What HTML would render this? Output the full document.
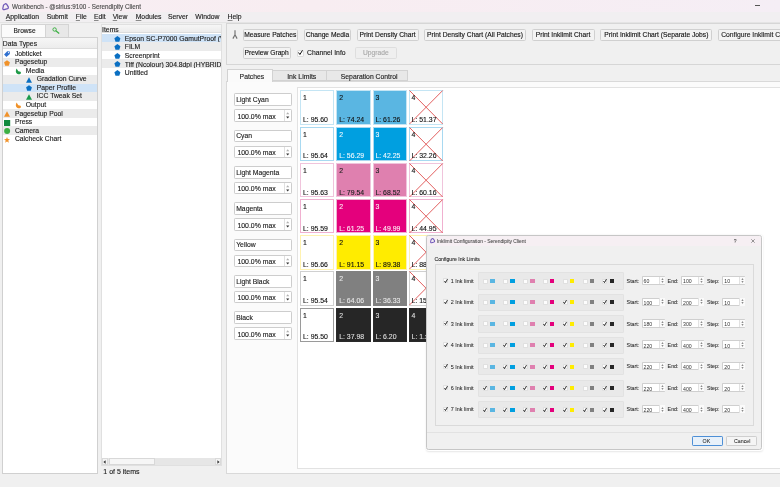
<!DOCTYPE html>
<html><head><meta charset="utf-8">
<style>
*{box-sizing:border-box;margin:0;padding:0}
html,body{width:780px;height:487px;overflow:hidden}
body{will-change:transform;position:relative;background:#f0f0f0;font-family:"Liberation Sans",sans-serif;font-size:6.7px;color:#1a1a1a}
.a{position:absolute}
.t{position:absolute;white-space:nowrap;line-height:1;-webkit-text-stroke:0.12px currentColor}
svg{position:absolute;overflow:visible}
u{text-decoration-thickness:0.4px;text-underline-offset:1px;text-decoration-color:#8a8a8a}
</style></head><body>
<div class="a" style="left:0px;top:0px;width:780.00px;height:11.50px;background:linear-gradient(90deg,#f7eef3,#f8edf1 40%,#f5eef5)"></div>
<div class="a" style="left:754.9px;top:5.0px;width:5.10px;height:0.60px;background:#555"></div>
<svg style="left:1.5px;top:2.6px" width="7.2" height="7.4" viewBox="0 0 7.2 7.4"><path d="M3.0 1.0 Q3.8 0.4 4.6 1.2 L6.3 3.9 Q6.8 5.0 5.6 5.6 L2.2 6.6 Q0.8 6.8 0.8 5.5 L1.4 2.6 Q1.8 1.6 3.0 1.0Z" fill="none" stroke="#7058b8" stroke-width="1.25"/></svg>
<div class="t" style="left:12px;top:3.87px;font-size:6.3px;color:#4a4a4a;">Workbench - @sirius:9100 - Serendipity Client</div>
<div class="a" style="left:0px;top:11.5px;width:780.00px;height:11.10px;background:#f1eff1;border-bottom:0.5px solid #e4e4e4"></div>
<div class="t" style="left:5.8px;top:14.44px;font-size:6.8px;"><u>A</u>pplication</div>
<div class="t" style="left:46.7px;top:14.44px;font-size:6.8px;">Submit</div>
<div class="t" style="left:75.8px;top:14.44px;font-size:6.8px;"><u>F</u>ile</div>
<div class="t" style="left:94px;top:14.44px;font-size:6.8px;"><u>E</u>dit</div>
<div class="t" style="left:112.7px;top:14.44px;font-size:6.8px;"><u>V</u>iew</div>
<div class="t" style="left:135.7px;top:14.44px;font-size:6.8px;"><u>M</u>odules</div>
<div class="t" style="left:168px;top:14.44px;font-size:6.8px;">Server</div>
<div class="t" style="left:195.3px;top:14.44px;font-size:6.8px;">Window</div>
<div class="t" style="left:227.6px;top:14.44px;font-size:6.8px;"><u>H</u>elp</div>
<div class="a" style="left:1px;top:23.8px;width:45.20px;height:13.80px;background:#fbfbfb;border:1px solid #d4d4d4;border-bottom:none"></div>
<div class="t" style="left:13.6px;top:27.61px;font-size:6.6px;">Browse</div>
<div class="a" style="left:46.2px;top:24.4px;width:23.00px;height:13.00px;background:#e8e8e8;border:1px solid #d4d4d4;border-left:none;border-bottom:none"></div>
<svg style="left:52.4px;top:27.4px" width="8" height="7" viewBox="0 0 8 7"><circle cx="2.6" cy="2.5" r="1.7" fill="none" stroke="#3cb043" stroke-width="1"/><path d="M3.8 3.7 L7.2 6.4" stroke="#3cb043" stroke-width="1.3"/></svg>
<div class="a" style="left:1.5px;top:37.2px;width:96.00px;height:437.20px;background:#fff;border:1px solid #d0d0d0"></div>
<div class="a" style="left:2.5px;top:38.2px;width:94.00px;height:11.30px;background:linear-gradient(#f6f6f6,#ececec);border-bottom:1px solid #dcdcdc"></div>
<div class="t" style="left:2.8px;top:40.84px;font-size:6.8px;">Data Types</div>
<div class="a" style="left:2.5px;top:49.5px;width:94.00px;height:8.55px;background:#ffffff"></div>
<svg style="left:4.3px;top:51.1px" width="6" height="6" viewBox="0 0 6 6"><path d="M3.2 0.2 L5.8 0.4 L5.8 3 L2.4 5.9 L0.1 3.4Z" fill="#2e6fd0"/><circle cx="4.5" cy="1.6" r="0.6" fill="#fff"/></svg>
<div class="t" style="left:14.9px;top:50.74px;font-size:6.8px;">Jobticket</div>
<div class="a" style="left:2.5px;top:58.05px;width:94.00px;height:8.55px;background:#ebebeb"></div>
<svg style="left:4.3px;top:59.65px" width="6" height="6" viewBox="0 0 6 6"><path d="M3 0.2 L5.9 2.3 L4.8 5.7 L1.2 5.7 L0.1 2.3Z" fill="#f0922a"/></svg>
<div class="t" style="left:14.9px;top:59.29px;font-size:6.8px;">Pagesetup</div>
<div class="a" style="left:2.5px;top:66.6px;width:94.00px;height:8.55px;background:#ffffff"></div>
<svg style="left:15.30px;top:67.50px" width="6.8" height="6.8" viewBox="0 0 6 6"><path d="M1.6 0.4 C0.3 1.6 0.4 4.4 2.2 5.3 C3.4 5.9 5.0 5.6 5.3 4.4 C5.4 3.4 4.4 2.8 3.5 3.1 C2.6 2.6 2.0 1.7 1.6 0.4Z" fill="#1f9a48"/></svg>
<div class="t" style="left:25.8px;top:67.84px;font-size:6.8px;">Media</div>
<div class="a" style="left:2.5px;top:75.15px;width:94.00px;height:8.55px;background:#ebebeb"></div>
<svg style="left:26.1px;top:76.75px" width="6" height="6" viewBox="0 0 6 6"><path d="M3 0.3 L6 5.7 L0 5.7Z" fill="#0a6fc2"/></svg>
<div class="t" style="left:36.7px;top:76.39px;font-size:6.8px;">Gradation Curve</div>
<div class="a" style="left:2.5px;top:83.7px;width:94.00px;height:8.55px;background:#cfe3f7"></div>
<svg style="left:26.1px;top:85.3px" width="6" height="6" viewBox="0 0 6 6"><path d="M3 0.2 L5.9 2.3 L4.8 5.7 L1.2 5.7 L0.1 2.3Z" fill="#0a6fc2"/></svg>
<div class="t" style="left:36.7px;top:84.94px;font-size:6.8px;">Paper Profile</div>
<div class="a" style="left:2.5px;top:92.25px;width:94.00px;height:8.55px;background:#ebebeb"></div>
<svg style="left:26.1px;top:93.85px" width="6" height="6" viewBox="0 0 6 6"><path d="M3 0.3 L6 5.7 L0 5.7Z" fill="#1a9a4a"/></svg>
<div class="t" style="left:36.7px;top:93.49px;font-size:6.8px;">ICC Tweak Set</div>
<div class="a" style="left:2.5px;top:100.8px;width:94.00px;height:8.55px;background:#ffffff"></div>
<svg style="left:15.30px;top:101.70px" width="6.8" height="6.8" viewBox="0 0 6 6"><path d="M1.6 0.4 C0.3 1.6 0.4 4.4 2.2 5.3 C3.4 5.9 5.0 5.6 5.3 4.4 C5.4 3.4 4.4 2.8 3.5 3.1 C2.6 2.6 2.0 1.7 1.6 0.4Z" fill="#f0922a"/></svg>
<div class="t" style="left:25.8px;top:102.04px;font-size:6.8px;">Output</div>
<div class="a" style="left:2.5px;top:109.35px;width:94.00px;height:8.55px;background:#ebebeb"></div>
<svg style="left:4.3px;top:110.95px" width="6" height="6" viewBox="0 0 6 6"><path d="M3 0.3 L6 5.7 L0 5.7Z" fill="#f0922a"/></svg>
<div class="t" style="left:14.9px;top:110.59px;font-size:6.8px;">Pagesetup Pool</div>
<div class="a" style="left:2.5px;top:117.9px;width:94.00px;height:8.55px;background:#ffffff"></div>
<svg style="left:4.3px;top:119.5px" width="6" height="6" viewBox="0 0 6 6"><rect x="0" y="0" width="6.2" height="6.2" fill="#118a3e"/></svg>
<div class="t" style="left:14.9px;top:119.14px;font-size:6.8px;">Press</div>
<div class="a" style="left:2.5px;top:126.45px;width:94.00px;height:8.55px;background:#ebebeb"></div>
<svg style="left:4.3px;top:128.05px" width="6" height="6" viewBox="0 0 6 6"><circle cx="3.1" cy="3" r="3" fill="#3cb043"/></svg>
<div class="t" style="left:14.9px;top:127.69px;font-size:6.8px;">Camera</div>
<div class="a" style="left:2.5px;top:135.0px;width:94.00px;height:8.55px;background:#ffffff"></div>
<svg style="left:4.3px;top:136.6px" width="6" height="6" viewBox="0 0 6 6"><path d="M3 0 L3.8 2.1 L6 2.2 L4.3 3.6 L4.9 5.8 L3 4.6 L1.1 5.8 L1.7 3.6 L0 2.2 L2.2 2.1Z" fill="#f0922a"/></svg>
<div class="t" style="left:14.9px;top:136.24px;font-size:6.8px;">Calcheck Chart</div>
<div class="a" style="left:100.8px;top:23.9px;width:121.40px;height:442.10px;background:#fff;border:1px solid #e0e0e0"></div>
<div class="a" style="left:101.8px;top:24.9px;width:119.40px;height:8.40px;background:linear-gradient(#f6f6f6,#ececec);border-bottom:1px solid #dcdcdc"></div>
<div class="t" style="left:102.1px;top:26.54px;font-size:6.8px;">Items</div>
<div class="a" style="left:101.8px;top:33.6px;width:119.40px;height:8.60px;background:#cfe3f7"></div>
<svg style="left:114.3px;top:35.60px" width="6.8" height="6" viewBox="0 0 6 6"><path d="M3 0.1 L6 2.2 L4.9 5.8 L1.1 5.8 L0 2.2Z" fill="#0a6fc2"/></svg>
<div class="t" style="left:124.8px;top:35.74px;font-size:6.8px;width:96.4px;overflow:hidden">Epson SC-P7000 GamutProof (V</div>
<div class="a" style="left:101.8px;top:42.2px;width:119.40px;height:8.60px;background:#ebebeb"></div>
<svg style="left:114.3px;top:44.20px" width="6.8" height="6" viewBox="0 0 6 6"><path d="M3 0.1 L6 2.2 L4.9 5.8 L1.1 5.8 L0 2.2Z" fill="#0a6fc2"/></svg>
<div class="t" style="left:124.8px;top:44.34px;font-size:6.8px;width:96.4px;overflow:hidden">FILM</div>
<div class="a" style="left:101.8px;top:50.8px;width:119.40px;height:8.60px;background:#fff"></div>
<svg style="left:114.3px;top:52.80px" width="6.8" height="6" viewBox="0 0 6 6"><path d="M3 0.1 L6 2.2 L4.9 5.8 L1.1 5.8 L0 2.2Z" fill="#0a6fc2"/></svg>
<div class="t" style="left:124.8px;top:52.94px;font-size:6.8px;width:96.4px;overflow:hidden">Screenprint</div>
<div class="a" style="left:101.8px;top:59.4px;width:119.40px;height:8.60px;background:#ebebeb"></div>
<svg style="left:114.3px;top:61.40px" width="6.8" height="6" viewBox="0 0 6 6"><path d="M3 0.1 L6 2.2 L4.9 5.8 L1.1 5.8 L0 2.2Z" fill="#0a6fc2"/></svg>
<div class="t" style="left:124.8px;top:61.54px;font-size:6.8px;width:96.4px;overflow:hidden">Tiff (Ncolour) 304.8dpi (HYBRID</div>
<div class="a" style="left:101.8px;top:68.0px;width:119.40px;height:8.60px;background:#fff"></div>
<svg style="left:114.3px;top:70.00px" width="6.8" height="6" viewBox="0 0 6 6"><path d="M3 0.1 L6 2.2 L4.9 5.8 L1.1 5.8 L0 2.2Z" fill="#0a6fc2"/></svg>
<div class="t" style="left:124.8px;top:70.14px;font-size:6.8px;width:96.4px;overflow:hidden">Untitled</div>
<div class="a" style="left:101.8px;top:457.5px;width:119.40px;height:7.70px;background:#e6e6e6"></div>
<div class="a" style="left:101.8px;top:457.5px;width:6.60px;height:7.70px;background:#f4f4f4;border:0.5px solid #dadada"></div>
<div class="a" style="left:108.6px;top:457.7px;width:46.60px;height:7.30px;background:#f6f6f6;border:0.5px solid #d8d8d8"></div>
<div class="a" style="left:214.9px;top:457.5px;width:6.30px;height:7.70px;background:#f4f4f4;border:0.5px solid #dadada"></div>
<svg style="left:103.4px;top:459.6px" width="3" height="4" viewBox="0 0 3 4"><path d="M2.6 0.2 L0.4 2 L2.6 3.8Z" fill="#333"/></svg>
<svg style="left:216.9px;top:459.6px" width="3" height="4" viewBox="0 0 3 4"><path d="M0.4 0.2 L2.6 2 L0.4 3.8Z" fill="#333"/></svg>
<div class="t" style="left:103.3px;top:468.37px;font-size:7.0px;">1 of 5 items</div>
<div class="a" style="left:226.2px;top:23.4px;width:563.80px;height:41.20px;border:1px solid #d6d6d6;background:#f0f0f0"></div>
<svg style="left:232px;top:29.6px" width="6" height="9" viewBox="0 0 6 9"><path d="M3 0.3 L3 5.2 M3 4.8 L0.9 8.6 M3 4.8 L5.1 8.6" fill="none" stroke="#707070" stroke-width="1.15"/></svg>
<div class="a" style="left:242.6px;top:28.6px;width:55.40px;height:12.80px;background:#f3f3f3;border:1px solid #d0d0d0;border-radius:1.6px;"></div>
<div class="t" style="left:242.6px;width:55.40px;text-align:center;top:31.83px;font-size:6.7px;color:#111">Measure Patches</div>
<div class="a" style="left:303.8px;top:28.6px;width:47.20px;height:12.80px;background:#f3f3f3;border:1px solid #d0d0d0;border-radius:1.6px;"></div>
<div class="t" style="left:303.8px;width:47.20px;text-align:center;top:31.83px;font-size:6.7px;color:#111">Change Media</div>
<div class="a" style="left:356.5px;top:28.6px;width:62.00px;height:12.80px;background:#f3f3f3;border:1px solid #d0d0d0;border-radius:1.6px;"></div>
<div class="t" style="left:356.5px;width:62.00px;text-align:center;top:31.83px;font-size:6.7px;color:#111">Print Density Chart</div>
<div class="a" style="left:424px;top:28.6px;width:102.00px;height:12.80px;background:#f3f3f3;border:1px solid #d0d0d0;border-radius:1.6px;"></div>
<div class="t" style="left:424px;width:102.00px;text-align:center;top:31.83px;font-size:6.7px;color:#111">Print Density Chart (All Patches)</div>
<div class="a" style="left:531.5px;top:28.6px;width:63.10px;height:12.80px;background:#f3f3f3;border:1px solid #d0d0d0;border-radius:1.6px;"></div>
<div class="t" style="left:531.5px;width:63.10px;text-align:center;top:31.83px;font-size:6.7px;color:#111">Print Inklimit Chart</div>
<div class="a" style="left:600.4px;top:28.6px;width:111.90px;height:12.80px;background:#f3f3f3;border:1px solid #d0d0d0;border-radius:1.6px;"></div>
<div class="t" style="left:600.4px;width:111.90px;text-align:center;top:31.83px;font-size:6.7px;color:#111">Print Inklimit Chart (Separate Jobs)</div>
<div class="a" style="left:718px;top:28.6px;width:82.00px;height:12.80px;background:#f3f3f3;border:1px solid #d0d0d0;border-radius:1.6px;"></div>
<div class="t" style="left:721.2px;top:32.09px;font-size:6.75px;">Configure Inklimit Chart</div>
<div class="a" style="left:242.6px;top:46.5px;width:48.20px;height:12.90px;background:#f3f3f3;border:1px solid #d0d0d0;border-radius:1.6px;"></div>
<div class="t" style="left:242.6px;width:48.20px;text-align:center;top:49.78px;font-size:6.7px;color:#111">Preview Graph</div>
<div class="a" style="left:296.7px;top:49.6px;width:6.90px;height:7.20px;background:#fbfbfb;border:0.6px solid #dcdcdc;border-radius:1px"></div>
<svg style="left:297.6px;top:50.4px" width="5" height="5" viewBox="0 0 5 5"><path d="M0.5 2.5 L1.9 4.5 L4.5 0.3" fill="none" stroke="#111" stroke-width="1"/></svg>
<div class="t" style="left:307px;top:49.84px;font-size:6.8px;">Channel Info</div>
<div class="a" style="left:355px;top:47px;width:41.70px;height:12.40px;background:#efefef;border:1px solid #dedede;border-radius:1.6px;"></div>
<div class="t" style="left:355px;width:41.70px;text-align:center;top:50.03px;font-size:6.7px;color:#a8a8a8">Upgrade</div>
<div class="a" style="left:226.2px;top:81.4px;width:563.80px;height:393.00px;background:#fbfbfb;border:1px solid #d9d9d9"></div>
<div class="a" style="left:227px;top:68.6px;width:45.80px;height:13.60px;background:#fafafa;border:1px solid #d2d2d2;border-bottom:none"></div>
<div class="t" style="left:239.6px;top:73.64px;font-size:6.8px;">Patches</div>
<div class="a" style="left:272.8px;top:69.6px;width:54.20px;height:11.90px;background:#e8e8e8;border:1px solid #d2d2d2;border-left:none"></div>
<div class="t" style="left:287.2px;top:73.66px;font-size:6.9px;">Ink Limits</div>
<div class="a" style="left:327px;top:69.6px;width:81.00px;height:11.90px;background:#e8e8e8;border:1px solid #d2d2d2;border-left:none"></div>
<div class="t" style="left:340.8px;top:73.64px;font-size:6.8px;">Separation Control</div>
<div class="a" style="left:297.4px;top:87.3px;width:492.60px;height:381.90px;background:#fff;border:1px solid #e2e2e2"></div>
<div class="a" style="left:234.3px;top:93.2px;width:57.70px;height:12.90px;background:#fff;border:1px solid #cdcdcd;border-radius:1.2px"></div>
<div class="t" style="left:236.2px;top:97.14px;font-size:6.8px;">Light Cyan</div>
<div class="a" style="left:234.3px;top:109.3px;width:57.70px;height:12.50px;background:#fff;border:1px solid #cdcdcd;border-radius:1.2px"></div>
<div class="a" style="left:284px;top:110.3px;width:7.00px;height:10.50px;border-left:0.7px solid #e0e0e0"></div>
<div class="t" style="left:237.4px;top:113.66px;font-size:6.9px;">100.0% max</div>
<svg style="left:286.1px;top:112.30px" width="3.4" height="7" viewBox="0 0 3.4 7"><path d="M0.1 2.2 L1.7 0.3 L3.3 2.2Z" fill="#b0b0b0"/><path d="M0.1 4.4 L1.7 6.4 L3.3 4.4Z" fill="#333"/></svg>
<div class="a" style="left:300.2px;top:90.3px;width:34.20px;height:34.50px;background:#fff;border:1px solid #c4e5f4"></div>
<div class="t" style="left:303.0px;top:95.46px;font-size:6.9px;color:#111;">1</div>
<div class="t" style="left:303.0px;top:117.16px;font-size:6.9px;color:#111;">L: 95.60</div>
<div class="a" style="left:336.4px;top:90.3px;width:34.20px;height:34.50px;background:#5ab6e2;border:1px solid #c4e5f4"></div>
<div class="t" style="left:339.2px;top:95.46px;font-size:6.9px;color:#111;">2</div>
<div class="t" style="left:339.2px;top:117.16px;font-size:6.9px;color:#111;">L: 74.24</div>
<div class="a" style="left:372.6px;top:90.3px;width:34.20px;height:34.50px;background:#5ab6e2;border:1px solid #c4e5f4"></div>
<div class="t" style="left:375.4px;top:95.46px;font-size:6.9px;color:#111;">3</div>
<div class="t" style="left:375.4px;top:117.16px;font-size:6.9px;color:#111;">L: 61.26</div>
<div class="a" style="left:408.8px;top:90.3px;width:34.20px;height:34.50px;background:#fff;border:1px solid #c4e5f4"></div>
<svg style="left:408.8px;top:90.30px" width="34.2" height="34.5" viewBox="0 0 34.2 34.5"><path d="M0.5 0.5 L33.7 34.0 M33.7 0.5 L0.5 34.0" stroke="#e25e5e" stroke-width="1"/></svg>
<div class="t" style="left:411.6px;top:95.46px;font-size:6.9px;color:#111;">4</div>
<div class="t" style="left:411.6px;top:117.16px;font-size:6.9px;color:#111;">L: 51.37</div>
<div class="a" style="left:234.3px;top:129.53px;width:57.70px;height:12.90px;background:#fff;border:1px solid #cdcdcd;border-radius:1.2px"></div>
<div class="t" style="left:236.2px;top:133.47px;font-size:6.8px;">Cyan</div>
<div class="a" style="left:234.3px;top:145.63px;width:57.70px;height:12.50px;background:#fff;border:1px solid #cdcdcd;border-radius:1.2px"></div>
<div class="a" style="left:284px;top:146.63px;width:7.00px;height:10.50px;border-left:0.7px solid #e0e0e0"></div>
<div class="t" style="left:237.4px;top:149.99px;font-size:6.9px;">100.0% max</div>
<svg style="left:286.1px;top:148.63px" width="3.4" height="7" viewBox="0 0 3.4 7"><path d="M0.1 2.2 L1.7 0.3 L3.3 2.2Z" fill="#b0b0b0"/><path d="M0.1 4.4 L1.7 6.4 L3.3 4.4Z" fill="#333"/></svg>
<div class="a" style="left:300.2px;top:126.5px;width:34.20px;height:34.50px;background:#fff;border:1px solid #a8d9f1"></div>
<div class="t" style="left:303.0px;top:131.66px;font-size:6.9px;color:#111;">1</div>
<div class="t" style="left:303.0px;top:153.36px;font-size:6.9px;color:#111;">L: 95.64</div>
<div class="a" style="left:336.4px;top:126.5px;width:34.20px;height:34.50px;background:#009fe0;border:1px solid #a8d9f1"></div>
<div class="t" style="left:339.2px;top:131.66px;font-size:6.9px;color:#e8f6fd;">2</div>
<div class="t" style="left:339.2px;top:153.36px;font-size:6.9px;color:#e8f6fd;">L: 56.29</div>
<div class="a" style="left:372.6px;top:126.5px;width:34.20px;height:34.50px;background:#009fe0;border:1px solid #a8d9f1"></div>
<div class="t" style="left:375.4px;top:131.66px;font-size:6.9px;color:#e8f6fd;">3</div>
<div class="t" style="left:375.4px;top:153.36px;font-size:6.9px;color:#e8f6fd;">L: 42.25</div>
<div class="a" style="left:408.8px;top:126.5px;width:34.20px;height:34.50px;background:#fff;border:1px solid #a8d9f1"></div>
<svg style="left:408.8px;top:126.50px" width="34.2" height="34.5" viewBox="0 0 34.2 34.5"><path d="M0.5 0.5 L33.7 34.0 M33.7 0.5 L0.5 34.0" stroke="#e25e5e" stroke-width="1"/></svg>
<div class="t" style="left:411.6px;top:131.66px;font-size:6.9px;color:#111;">4</div>
<div class="t" style="left:411.6px;top:153.36px;font-size:6.9px;color:#111;">L: 32.26</div>
<div class="a" style="left:234.3px;top:165.86px;width:57.70px;height:12.90px;background:#fff;border:1px solid #cdcdcd;border-radius:1.2px"></div>
<div class="t" style="left:236.2px;top:169.80px;font-size:6.8px;">Light Magenta</div>
<div class="a" style="left:234.3px;top:181.96px;width:57.70px;height:12.50px;background:#fff;border:1px solid #cdcdcd;border-radius:1.2px"></div>
<div class="a" style="left:284px;top:182.96px;width:7.00px;height:10.50px;border-left:0.7px solid #e0e0e0"></div>
<div class="t" style="left:237.4px;top:186.32px;font-size:6.9px;">100.0% max</div>
<svg style="left:286.1px;top:184.96px" width="3.4" height="7" viewBox="0 0 3.4 7"><path d="M0.1 2.2 L1.7 0.3 L3.3 2.2Z" fill="#b0b0b0"/><path d="M0.1 4.4 L1.7 6.4 L3.3 4.4Z" fill="#333"/></svg>
<div class="a" style="left:300.2px;top:162.7px;width:34.20px;height:34.50px;background:#fff;border:1px solid #f0c4dc"></div>
<div class="t" style="left:303.0px;top:167.86px;font-size:6.9px;color:#111;">1</div>
<div class="t" style="left:303.0px;top:189.56px;font-size:6.9px;color:#111;">L: 95.63</div>
<div class="a" style="left:336.4px;top:162.7px;width:34.20px;height:34.50px;background:#df80af;border:1px solid #f0c4dc"></div>
<div class="t" style="left:339.2px;top:167.86px;font-size:6.9px;color:#222;">2</div>
<div class="t" style="left:339.2px;top:189.56px;font-size:6.9px;color:#222;">L: 79.54</div>
<div class="a" style="left:372.6px;top:162.7px;width:34.20px;height:34.50px;background:#df80af;border:1px solid #f0c4dc"></div>
<div class="t" style="left:375.4px;top:167.86px;font-size:6.9px;color:#222;">3</div>
<div class="t" style="left:375.4px;top:189.56px;font-size:6.9px;color:#222;">L: 68.52</div>
<div class="a" style="left:408.8px;top:162.7px;width:34.20px;height:34.50px;background:#fff;border:1px solid #f0c4dc"></div>
<svg style="left:408.8px;top:162.70px" width="34.2" height="34.5" viewBox="0 0 34.2 34.5"><path d="M0.5 0.5 L33.7 34.0 M33.7 0.5 L0.5 34.0" stroke="#e25e5e" stroke-width="1"/></svg>
<div class="t" style="left:411.6px;top:167.86px;font-size:6.9px;color:#111;">4</div>
<div class="t" style="left:411.6px;top:189.56px;font-size:6.9px;color:#111;">L: 60.16</div>
<div class="a" style="left:234.3px;top:202.19px;width:57.70px;height:12.90px;background:#fff;border:1px solid #cdcdcd;border-radius:1.2px"></div>
<div class="t" style="left:236.2px;top:206.13px;font-size:6.8px;">Magenta</div>
<div class="a" style="left:234.3px;top:218.29px;width:57.70px;height:12.50px;background:#fff;border:1px solid #cdcdcd;border-radius:1.2px"></div>
<div class="a" style="left:284px;top:219.29px;width:7.00px;height:10.50px;border-left:0.7px solid #e0e0e0"></div>
<div class="t" style="left:237.4px;top:222.65px;font-size:6.9px;">100.0% max</div>
<svg style="left:286.1px;top:221.29px" width="3.4" height="7" viewBox="0 0 3.4 7"><path d="M0.1 2.2 L1.7 0.3 L3.3 2.2Z" fill="#b0b0b0"/><path d="M0.1 4.4 L1.7 6.4 L3.3 4.4Z" fill="#333"/></svg>
<div class="a" style="left:300.2px;top:198.9px;width:34.20px;height:34.50px;background:#fff;border:1px solid #f0b0d0"></div>
<div class="t" style="left:303.0px;top:204.06px;font-size:6.9px;color:#111;">1</div>
<div class="t" style="left:303.0px;top:225.76px;font-size:6.9px;color:#111;">L: 95.59</div>
<div class="a" style="left:336.4px;top:198.9px;width:34.20px;height:34.50px;background:#e4007c;border:1px solid #f0b0d0"></div>
<div class="t" style="left:339.2px;top:204.06px;font-size:6.9px;color:#fde6f1;">2</div>
<div class="t" style="left:339.2px;top:225.76px;font-size:6.9px;color:#fde6f1;">L: 61.25</div>
<div class="a" style="left:372.6px;top:198.9px;width:34.20px;height:34.50px;background:#e4007c;border:1px solid #f0b0d0"></div>
<div class="t" style="left:375.4px;top:204.06px;font-size:6.9px;color:#fde6f1;">3</div>
<div class="t" style="left:375.4px;top:225.76px;font-size:6.9px;color:#fde6f1;">L: 49.99</div>
<div class="a" style="left:408.8px;top:198.9px;width:34.20px;height:34.50px;background:#fff;border:1px solid #f0b0d0"></div>
<svg style="left:408.8px;top:198.90px" width="34.2" height="34.5" viewBox="0 0 34.2 34.5"><path d="M0.5 0.5 L33.7 34.0 M33.7 0.5 L0.5 34.0" stroke="#e25e5e" stroke-width="1"/></svg>
<div class="t" style="left:411.6px;top:204.06px;font-size:6.9px;color:#111;">4</div>
<div class="t" style="left:411.6px;top:225.76px;font-size:6.9px;color:#111;">L: 44.95</div>
<div class="a" style="left:234.3px;top:238.52px;width:57.70px;height:12.90px;background:#fff;border:1px solid #cdcdcd;border-radius:1.2px"></div>
<div class="t" style="left:236.2px;top:242.46px;font-size:6.8px;">Yellow</div>
<div class="a" style="left:234.3px;top:254.62px;width:57.70px;height:12.50px;background:#fff;border:1px solid #cdcdcd;border-radius:1.2px"></div>
<div class="a" style="left:284px;top:255.62px;width:7.00px;height:10.50px;border-left:0.7px solid #e0e0e0"></div>
<div class="t" style="left:237.4px;top:258.98px;font-size:6.9px;">100.0% max</div>
<svg style="left:286.1px;top:257.62px" width="3.4" height="7" viewBox="0 0 3.4 7"><path d="M0.1 2.2 L1.7 0.3 L3.3 2.2Z" fill="#b0b0b0"/><path d="M0.1 4.4 L1.7 6.4 L3.3 4.4Z" fill="#333"/></svg>
<div class="a" style="left:300.2px;top:235.1px;width:34.20px;height:34.50px;background:#fff;border:1px solid #fff2b0"></div>
<div class="t" style="left:303.0px;top:240.26px;font-size:6.9px;color:#111;">1</div>
<div class="t" style="left:303.0px;top:261.96px;font-size:6.9px;color:#111;">L: 95.66</div>
<div class="a" style="left:336.4px;top:235.1px;width:34.20px;height:34.50px;background:#ffec00;border:1px solid #fff2b0"></div>
<div class="t" style="left:339.2px;top:240.26px;font-size:6.9px;color:#111;">2</div>
<div class="t" style="left:339.2px;top:261.96px;font-size:6.9px;color:#111;">L: 91.15</div>
<div class="a" style="left:372.6px;top:235.1px;width:34.20px;height:34.50px;background:#ffec00;border:1px solid #fff2b0"></div>
<div class="t" style="left:375.4px;top:240.26px;font-size:6.9px;color:#111;">3</div>
<div class="t" style="left:375.4px;top:261.96px;font-size:6.9px;color:#111;">L: 89.38</div>
<div class="a" style="left:408.8px;top:235.1px;width:34.20px;height:34.50px;background:#fff;border:1px solid #fff2b0"></div>
<svg style="left:408.8px;top:235.10px" width="34.2" height="34.5" viewBox="0 0 34.2 34.5"><path d="M0.5 0.5 L33.7 34.0 M33.7 0.5 L0.5 34.0" stroke="#e25e5e" stroke-width="1"/></svg>
<div class="t" style="left:411.6px;top:240.26px;font-size:6.9px;color:#111;">4</div>
<div class="t" style="left:411.6px;top:261.96px;font-size:6.9px;color:#111;">L: 88.xx</div>
<div class="a" style="left:234.3px;top:274.85px;width:57.70px;height:12.90px;background:#fff;border:1px solid #cdcdcd;border-radius:1.2px"></div>
<div class="t" style="left:236.2px;top:278.79px;font-size:6.8px;">Light Black</div>
<div class="a" style="left:234.3px;top:290.95px;width:57.70px;height:12.50px;background:#fff;border:1px solid #cdcdcd;border-radius:1.2px"></div>
<div class="a" style="left:284px;top:291.95px;width:7.00px;height:10.50px;border-left:0.7px solid #e0e0e0"></div>
<div class="t" style="left:237.4px;top:295.31px;font-size:6.9px;">100.0% max</div>
<svg style="left:286.1px;top:293.95px" width="3.4" height="7" viewBox="0 0 3.4 7"><path d="M0.1 2.2 L1.7 0.3 L3.3 2.2Z" fill="#b0b0b0"/><path d="M0.1 4.4 L1.7 6.4 L3.3 4.4Z" fill="#333"/></svg>
<div class="a" style="left:300.2px;top:271.3px;width:34.20px;height:34.50px;background:#fff;border:1px solid #d0d0d0"></div>
<div class="t" style="left:303.0px;top:276.46px;font-size:6.9px;color:#111;">1</div>
<div class="t" style="left:303.0px;top:298.16px;font-size:6.9px;color:#111;">L: 95.54</div>
<div class="a" style="left:336.4px;top:271.3px;width:34.20px;height:34.50px;background:#808080;border:1px solid #808080"></div>
<div class="t" style="left:339.2px;top:276.46px;font-size:6.9px;color:#e6e6e6;">2</div>
<div class="t" style="left:339.2px;top:298.16px;font-size:6.9px;color:#e6e6e6;">L: 64.06</div>
<div class="a" style="left:372.6px;top:271.3px;width:34.20px;height:34.50px;background:#808080;border:1px solid #808080"></div>
<div class="t" style="left:375.4px;top:276.46px;font-size:6.9px;color:#e6e6e6;">3</div>
<div class="t" style="left:375.4px;top:298.16px;font-size:6.9px;color:#e6e6e6;">L: 36.33</div>
<div class="a" style="left:408.8px;top:271.3px;width:34.20px;height:34.50px;background:#fff;border:1px solid #d0d0d0"></div>
<svg style="left:408.8px;top:271.30px" width="34.2" height="34.5" viewBox="0 0 34.2 34.5"><path d="M0.5 0.5 L33.7 34.0 M33.7 0.5 L0.5 34.0" stroke="#e25e5e" stroke-width="1"/></svg>
<div class="t" style="left:411.6px;top:276.46px;font-size:6.9px;color:#111;">4</div>
<div class="t" style="left:411.6px;top:298.16px;font-size:6.9px;color:#111;">L: 15.xx</div>
<div class="a" style="left:234.3px;top:311.18px;width:57.70px;height:12.90px;background:#fff;border:1px solid #cdcdcd;border-radius:1.2px"></div>
<div class="t" style="left:236.2px;top:315.12px;font-size:6.8px;">Black</div>
<div class="a" style="left:234.3px;top:327.28px;width:57.70px;height:12.50px;background:#fff;border:1px solid #cdcdcd;border-radius:1.2px"></div>
<div class="a" style="left:284px;top:328.28px;width:7.00px;height:10.50px;border-left:0.7px solid #e0e0e0"></div>
<div class="t" style="left:237.4px;top:331.64px;font-size:6.9px;">100.0% max</div>
<svg style="left:286.1px;top:330.28px" width="3.4" height="7" viewBox="0 0 3.4 7"><path d="M0.1 2.2 L1.7 0.3 L3.3 2.2Z" fill="#b0b0b0"/><path d="M0.1 4.4 L1.7 6.4 L3.3 4.4Z" fill="#333"/></svg>
<div class="a" style="left:300.2px;top:307.5px;width:34.20px;height:34.50px;background:#fff;border:1px solid #9a9a9a"></div>
<div class="t" style="left:303.0px;top:312.66px;font-size:6.9px;color:#111;">1</div>
<div class="t" style="left:303.0px;top:334.36px;font-size:6.9px;color:#111;">L: 95.50</div>
<div class="a" style="left:336.4px;top:307.5px;width:34.20px;height:34.50px;background:#262626;border:1px solid #2a2a2a"></div>
<div class="t" style="left:339.2px;top:312.66px;font-size:6.9px;color:#dedede;">2</div>
<div class="t" style="left:339.2px;top:334.36px;font-size:6.9px;color:#dedede;">L: 37.98</div>
<div class="a" style="left:372.6px;top:307.5px;width:34.20px;height:34.50px;background:#262626;border:1px solid #2a2a2a"></div>
<div class="t" style="left:375.4px;top:312.66px;font-size:6.9px;color:#dedede;">3</div>
<div class="t" style="left:375.4px;top:334.36px;font-size:6.9px;color:#dedede;">L: 6.20</div>
<div class="a" style="left:408.8px;top:307.5px;width:34.20px;height:34.50px;background:#262626;border:1px solid #2a2a2a"></div>
<div class="t" style="left:411.6px;top:312.66px;font-size:6.9px;color:#dedede;">4</div>
<div class="t" style="left:411.6px;top:334.36px;font-size:6.9px;color:#dedede;">L: 1.xx</div>
<div class="a" style="left:425.9px;top:234.8px;width:337.10px;height:216.00px;border-radius:3px;box-shadow:0 0.5px 2px rgba(0,0,0,0.10)"></div>
<div class="a" style="left:426.4px;top:235.3px;width:335.80px;height:214.70px;background:#f0f0f0;border:0.8px solid #c6c6c6;border-radius:2.5px;overflow:hidden"></div>
<div class="a" style="left:427.2px;top:236.10000000000002px;width:334.20px;height:10.40px;background:#f6eff3;border-radius:2px 2px 0 0"></div>
<svg style="left:430.0px;top:238.3px" width="5.2" height="5.4" viewBox="0 0 7.2 7.4"><path d="M3.0 1.0 Q3.8 0.4 4.6 1.2 L6.3 3.9 Q6.8 5.0 5.6 5.6 L2.2 6.6 Q0.8 6.8 0.8 5.5 L1.4 2.6 Q1.8 1.6 3.0 1.0Z" fill="none" stroke="#7058b8" stroke-width="1.4"/></svg>
<div class="t" style="left:436.8px;top:239.71px;font-size:4.95px;color:#444;-webkit-text-stroke:0.05px">Inklimit Configuration - Serendipity Client</div>
<div class="t" style="left:733.8px;top:239.37px;font-size:5px;color:#555;">?</div>
<svg style="left:750.6px;top:239.4px" width="4" height="4" viewBox="0 0 4 4"><path d="M0.3 0.3 L3.7 3.7 M3.7 0.3 L0.3 3.7" stroke="#555" stroke-width="0.6"/></svg>
<div class="t" style="left:434.5px;top:256.84px;font-size:5.15px;color:#222;-webkit-text-stroke:0.08px">Configure Ink Limits</div>
<div class="a" style="left:435.3px;top:263.5px;width:318.50px;height:162.90px;border:0.8px solid #dadada"></div>
<div class="a" style="left:478.3px;top:272.3px;width:145.50px;height:17.40px;background:#e9e9e9;border:0.6px solid #e2e2e2;border-radius:1px"></div>
<div class="a" style="left:443.0px;top:278.0px;width:5.00px;height:5.00px;background:#fdfdfd;border:0.5px solid #e0e0e0;border-radius:0.6px"></div>
<svg style="left:443.50px;top:278.50px" width="4" height="4" viewBox="0 0 4 4"><path d="M0.5 2.0 L1.5 3.6 L3.5 0.1" fill="none" stroke="#1a1a1a" stroke-width="0.9"/></svg>
<div class="t" style="left:450.8px;top:278.73px;font-size:5.4px;color:#222;-webkit-text-stroke:0.05px">1 Ink limit</div>
<div class="a" style="left:482.9px;top:278.5px;width:5.00px;height:5.00px;background:#fdfdfd;border:0.5px solid #e0e0e0;border-radius:0.6px"></div>
<div class="a" style="left:490.1px;top:278.8px;width:4.60px;height:4.20px;background:#5ab6e2"></div>
<div class="a" style="left:502.83px;top:278.5px;width:5.00px;height:5.00px;background:#fdfdfd;border:0.5px solid #e0e0e0;border-radius:0.6px"></div>
<div class="a" style="left:510.03px;top:278.8px;width:4.60px;height:4.20px;background:#009fe0"></div>
<div class="a" style="left:522.76px;top:278.5px;width:5.00px;height:5.00px;background:#fdfdfd;border:0.5px solid #e0e0e0;border-radius:0.6px"></div>
<div class="a" style="left:529.96px;top:278.8px;width:4.60px;height:4.20px;background:#df80af"></div>
<div class="a" style="left:542.69px;top:278.5px;width:5.00px;height:5.00px;background:#fdfdfd;border:0.5px solid #e0e0e0;border-radius:0.6px"></div>
<div class="a" style="left:549.89px;top:278.8px;width:4.60px;height:4.20px;background:#e4007c"></div>
<div class="a" style="left:562.62px;top:278.5px;width:5.00px;height:5.00px;background:#fdfdfd;border:0.5px solid #e0e0e0;border-radius:0.6px"></div>
<div class="a" style="left:569.82px;top:278.8px;width:4.60px;height:4.20px;background:#ffec00"></div>
<div class="a" style="left:582.55px;top:278.5px;width:5.00px;height:5.00px;background:#fdfdfd;border:0.5px solid #e0e0e0;border-radius:0.6px"></div>
<div class="a" style="left:589.75px;top:278.8px;width:4.60px;height:4.20px;background:#808080"></div>
<div class="a" style="left:602.48px;top:278.5px;width:5.00px;height:5.00px;background:#fdfdfd;border:0.5px solid #e0e0e0;border-radius:0.6px"></div>
<svg style="left:602.98px;top:279.00px" width="4" height="4" viewBox="0 0 4 4"><path d="M0.5 2.0 L1.5 3.6 L3.5 0.1" fill="none" stroke="#1a1a1a" stroke-width="0.9"/></svg>
<div class="a" style="left:609.68px;top:278.8px;width:4.60px;height:4.20px;background:#262626"></div>
<div class="t" style="left:626.6px;top:278.61px;font-size:5.3px;color:#222;-webkit-text-stroke:0.05px">Start:</div>
<div class="a" style="left:641.5px;top:276.1px;width:23.70px;height:8.60px;background:#fff;border:0.6px solid #cfcfcf;border-radius:0.8px"></div>
<div class="a" style="left:659.2px;top:276.7px;width:5.40px;height:7.40px;border-left:0.5px solid #e2e2e2;background:#fafafa"></div>
<svg style="left:660.60px;top:277.90px" width="3" height="5" viewBox="0 0 3 5"><path d="M0.4 1.7 L1.5 0.3 L2.6 1.7Z M0.4 3.3 L1.5 4.7 L2.6 3.3Z" fill="#666"/></svg>
<div class="t" style="left:643.5px;top:279.30px;font-size:5.2px;color:#333;-webkit-text-stroke:0">60</div>
<div class="t" style="left:667.6px;top:278.61px;font-size:5.3px;color:#222;-webkit-text-stroke:0.05px">End:</div>
<div class="a" style="left:681.0px;top:276.1px;width:23.40px;height:8.60px;background:#fff;border:0.6px solid #cfcfcf;border-radius:0.8px"></div>
<div class="a" style="left:698.4px;top:276.7px;width:5.40px;height:7.40px;border-left:0.5px solid #e2e2e2;background:#fafafa"></div>
<svg style="left:699.80px;top:277.90px" width="3" height="5" viewBox="0 0 3 5"><path d="M0.4 1.7 L1.5 0.3 L2.6 1.7Z M0.4 3.3 L1.5 4.7 L2.6 3.3Z" fill="#666"/></svg>
<div class="t" style="left:683.0px;top:279.30px;font-size:5.2px;color:#333;-webkit-text-stroke:0">100</div>
<div class="t" style="left:707.0px;top:278.61px;font-size:5.3px;color:#222;-webkit-text-stroke:0.05px">Step:</div>
<div class="a" style="left:722.3px;top:276.1px;width:23.00px;height:8.60px;background:#fff;border:0.6px solid #cfcfcf;border-radius:0.8px"></div>
<div class="a" style="left:739.3px;top:276.7px;width:5.40px;height:7.40px;border-left:0.5px solid #e2e2e2;background:#fafafa"></div>
<svg style="left:740.70px;top:277.90px" width="3" height="5" viewBox="0 0 3 5"><path d="M0.4 1.7 L1.5 0.3 L2.6 1.7Z M0.4 3.3 L1.5 4.7 L2.6 3.3Z" fill="#666"/></svg>
<div class="t" style="left:724.3px;top:279.30px;font-size:5.2px;color:#333;-webkit-text-stroke:0">10</div>
<div class="a" style="left:478.3px;top:293.75px;width:145.50px;height:17.40px;background:#e9e9e9;border:0.6px solid #e2e2e2;border-radius:1px"></div>
<div class="a" style="left:443.0px;top:299.45px;width:5.00px;height:5.00px;background:#fdfdfd;border:0.5px solid #e0e0e0;border-radius:0.6px"></div>
<svg style="left:443.50px;top:299.95px" width="4" height="4" viewBox="0 0 4 4"><path d="M0.5 2.0 L1.5 3.6 L3.5 0.1" fill="none" stroke="#1a1a1a" stroke-width="0.9"/></svg>
<div class="t" style="left:450.8px;top:300.18px;font-size:5.4px;color:#222;-webkit-text-stroke:0.05px">2 Ink limit</div>
<div class="a" style="left:482.9px;top:299.95px;width:5.00px;height:5.00px;background:#fdfdfd;border:0.5px solid #e0e0e0;border-radius:0.6px"></div>
<div class="a" style="left:490.1px;top:300.25px;width:4.60px;height:4.20px;background:#5ab6e2"></div>
<div class="a" style="left:502.83px;top:299.95px;width:5.00px;height:5.00px;background:#fdfdfd;border:0.5px solid #e0e0e0;border-radius:0.6px"></div>
<div class="a" style="left:510.03px;top:300.25px;width:4.60px;height:4.20px;background:#009fe0"></div>
<div class="a" style="left:522.76px;top:299.95px;width:5.00px;height:5.00px;background:#fdfdfd;border:0.5px solid #e0e0e0;border-radius:0.6px"></div>
<div class="a" style="left:529.96px;top:300.25px;width:4.60px;height:4.20px;background:#df80af"></div>
<div class="a" style="left:542.69px;top:299.95px;width:5.00px;height:5.00px;background:#fdfdfd;border:0.5px solid #e0e0e0;border-radius:0.6px"></div>
<div class="a" style="left:549.89px;top:300.25px;width:4.60px;height:4.20px;background:#e4007c"></div>
<div class="a" style="left:562.62px;top:299.95px;width:5.00px;height:5.00px;background:#fdfdfd;border:0.5px solid #e0e0e0;border-radius:0.6px"></div>
<svg style="left:563.12px;top:300.45px" width="4" height="4" viewBox="0 0 4 4"><path d="M0.5 2.0 L1.5 3.6 L3.5 0.1" fill="none" stroke="#1a1a1a" stroke-width="0.9"/></svg>
<div class="a" style="left:569.82px;top:300.25px;width:4.60px;height:4.20px;background:#ffec00"></div>
<div class="a" style="left:582.55px;top:299.95px;width:5.00px;height:5.00px;background:#fdfdfd;border:0.5px solid #e0e0e0;border-radius:0.6px"></div>
<div class="a" style="left:589.75px;top:300.25px;width:4.60px;height:4.20px;background:#808080"></div>
<div class="a" style="left:602.48px;top:299.95px;width:5.00px;height:5.00px;background:#fdfdfd;border:0.5px solid #e0e0e0;border-radius:0.6px"></div>
<svg style="left:602.98px;top:300.45px" width="4" height="4" viewBox="0 0 4 4"><path d="M0.5 2.0 L1.5 3.6 L3.5 0.1" fill="none" stroke="#1a1a1a" stroke-width="0.9"/></svg>
<div class="a" style="left:609.68px;top:300.25px;width:4.60px;height:4.20px;background:#262626"></div>
<div class="t" style="left:626.6px;top:300.06px;font-size:5.3px;color:#222;-webkit-text-stroke:0.05px">Start:</div>
<div class="a" style="left:641.5px;top:297.55px;width:23.70px;height:8.60px;background:#fff;border:0.6px solid #cfcfcf;border-radius:0.8px"></div>
<div class="a" style="left:659.2px;top:298.15px;width:5.40px;height:7.40px;border-left:0.5px solid #e2e2e2;background:#fafafa"></div>
<svg style="left:660.60px;top:299.35px" width="3" height="5" viewBox="0 0 3 5"><path d="M0.4 1.7 L1.5 0.3 L2.6 1.7Z M0.4 3.3 L1.5 4.7 L2.6 3.3Z" fill="#666"/></svg>
<div class="t" style="left:643.5px;top:300.75px;font-size:5.2px;color:#333;-webkit-text-stroke:0">100</div>
<div class="t" style="left:667.6px;top:300.06px;font-size:5.3px;color:#222;-webkit-text-stroke:0.05px">End:</div>
<div class="a" style="left:681.0px;top:297.55px;width:23.40px;height:8.60px;background:#fff;border:0.6px solid #cfcfcf;border-radius:0.8px"></div>
<div class="a" style="left:698.4px;top:298.15px;width:5.40px;height:7.40px;border-left:0.5px solid #e2e2e2;background:#fafafa"></div>
<svg style="left:699.80px;top:299.35px" width="3" height="5" viewBox="0 0 3 5"><path d="M0.4 1.7 L1.5 0.3 L2.6 1.7Z M0.4 3.3 L1.5 4.7 L2.6 3.3Z" fill="#666"/></svg>
<div class="t" style="left:683.0px;top:300.75px;font-size:5.2px;color:#333;-webkit-text-stroke:0">200</div>
<div class="t" style="left:707.0px;top:300.06px;font-size:5.3px;color:#222;-webkit-text-stroke:0.05px">Step:</div>
<div class="a" style="left:722.3px;top:297.55px;width:23.00px;height:8.60px;background:#fff;border:0.6px solid #cfcfcf;border-radius:0.8px"></div>
<div class="a" style="left:739.3px;top:298.15px;width:5.40px;height:7.40px;border-left:0.5px solid #e2e2e2;background:#fafafa"></div>
<svg style="left:740.70px;top:299.35px" width="3" height="5" viewBox="0 0 3 5"><path d="M0.4 1.7 L1.5 0.3 L2.6 1.7Z M0.4 3.3 L1.5 4.7 L2.6 3.3Z" fill="#666"/></svg>
<div class="t" style="left:724.3px;top:300.75px;font-size:5.2px;color:#333;-webkit-text-stroke:0">10</div>
<div class="a" style="left:478.3px;top:315.2px;width:145.50px;height:17.40px;background:#e9e9e9;border:0.6px solid #e2e2e2;border-radius:1px"></div>
<div class="a" style="left:443.0px;top:320.9px;width:5.00px;height:5.00px;background:#fdfdfd;border:0.5px solid #e0e0e0;border-radius:0.6px"></div>
<svg style="left:443.50px;top:321.40px" width="4" height="4" viewBox="0 0 4 4"><path d="M0.5 2.0 L1.5 3.6 L3.5 0.1" fill="none" stroke="#1a1a1a" stroke-width="0.9"/></svg>
<div class="t" style="left:450.8px;top:321.63px;font-size:5.4px;color:#222;-webkit-text-stroke:0.05px">3 Ink limit</div>
<div class="a" style="left:482.9px;top:321.4px;width:5.00px;height:5.00px;background:#fdfdfd;border:0.5px solid #e0e0e0;border-radius:0.6px"></div>
<div class="a" style="left:490.1px;top:321.7px;width:4.60px;height:4.20px;background:#5ab6e2"></div>
<div class="a" style="left:502.83px;top:321.4px;width:5.00px;height:5.00px;background:#fdfdfd;border:0.5px solid #e0e0e0;border-radius:0.6px"></div>
<div class="a" style="left:510.03px;top:321.7px;width:4.60px;height:4.20px;background:#009fe0"></div>
<div class="a" style="left:522.76px;top:321.4px;width:5.00px;height:5.00px;background:#fdfdfd;border:0.5px solid #e0e0e0;border-radius:0.6px"></div>
<div class="a" style="left:529.96px;top:321.7px;width:4.60px;height:4.20px;background:#df80af"></div>
<div class="a" style="left:542.69px;top:321.4px;width:5.00px;height:5.00px;background:#fdfdfd;border:0.5px solid #e0e0e0;border-radius:0.6px"></div>
<svg style="left:543.19px;top:321.90px" width="4" height="4" viewBox="0 0 4 4"><path d="M0.5 2.0 L1.5 3.6 L3.5 0.1" fill="none" stroke="#1a1a1a" stroke-width="0.9"/></svg>
<div class="a" style="left:549.89px;top:321.7px;width:4.60px;height:4.20px;background:#e4007c"></div>
<div class="a" style="left:562.62px;top:321.4px;width:5.00px;height:5.00px;background:#fdfdfd;border:0.5px solid #e0e0e0;border-radius:0.6px"></div>
<svg style="left:563.12px;top:321.90px" width="4" height="4" viewBox="0 0 4 4"><path d="M0.5 2.0 L1.5 3.6 L3.5 0.1" fill="none" stroke="#1a1a1a" stroke-width="0.9"/></svg>
<div class="a" style="left:569.82px;top:321.7px;width:4.60px;height:4.20px;background:#ffec00"></div>
<div class="a" style="left:582.55px;top:321.4px;width:5.00px;height:5.00px;background:#fdfdfd;border:0.5px solid #e0e0e0;border-radius:0.6px"></div>
<div class="a" style="left:589.75px;top:321.7px;width:4.60px;height:4.20px;background:#808080"></div>
<div class="a" style="left:602.48px;top:321.4px;width:5.00px;height:5.00px;background:#fdfdfd;border:0.5px solid #e0e0e0;border-radius:0.6px"></div>
<svg style="left:602.98px;top:321.90px" width="4" height="4" viewBox="0 0 4 4"><path d="M0.5 2.0 L1.5 3.6 L3.5 0.1" fill="none" stroke="#1a1a1a" stroke-width="0.9"/></svg>
<div class="a" style="left:609.68px;top:321.7px;width:4.60px;height:4.20px;background:#262626"></div>
<div class="t" style="left:626.6px;top:321.51px;font-size:5.3px;color:#222;-webkit-text-stroke:0.05px">Start:</div>
<div class="a" style="left:641.5px;top:319.0px;width:23.70px;height:8.60px;background:#fff;border:0.6px solid #cfcfcf;border-radius:0.8px"></div>
<div class="a" style="left:659.2px;top:319.6px;width:5.40px;height:7.40px;border-left:0.5px solid #e2e2e2;background:#fafafa"></div>
<svg style="left:660.60px;top:320.80px" width="3" height="5" viewBox="0 0 3 5"><path d="M0.4 1.7 L1.5 0.3 L2.6 1.7Z M0.4 3.3 L1.5 4.7 L2.6 3.3Z" fill="#666"/></svg>
<div class="t" style="left:643.5px;top:322.20px;font-size:5.2px;color:#333;-webkit-text-stroke:0">180</div>
<div class="t" style="left:667.6px;top:321.51px;font-size:5.3px;color:#222;-webkit-text-stroke:0.05px">End:</div>
<div class="a" style="left:681.0px;top:319.0px;width:23.40px;height:8.60px;background:#fff;border:0.6px solid #cfcfcf;border-radius:0.8px"></div>
<div class="a" style="left:698.4px;top:319.6px;width:5.40px;height:7.40px;border-left:0.5px solid #e2e2e2;background:#fafafa"></div>
<svg style="left:699.80px;top:320.80px" width="3" height="5" viewBox="0 0 3 5"><path d="M0.4 1.7 L1.5 0.3 L2.6 1.7Z M0.4 3.3 L1.5 4.7 L2.6 3.3Z" fill="#666"/></svg>
<div class="t" style="left:683.0px;top:322.20px;font-size:5.2px;color:#333;-webkit-text-stroke:0">300</div>
<div class="t" style="left:707.0px;top:321.51px;font-size:5.3px;color:#222;-webkit-text-stroke:0.05px">Step:</div>
<div class="a" style="left:722.3px;top:319.0px;width:23.00px;height:8.60px;background:#fff;border:0.6px solid #cfcfcf;border-radius:0.8px"></div>
<div class="a" style="left:739.3px;top:319.6px;width:5.40px;height:7.40px;border-left:0.5px solid #e2e2e2;background:#fafafa"></div>
<svg style="left:740.70px;top:320.80px" width="3" height="5" viewBox="0 0 3 5"><path d="M0.4 1.7 L1.5 0.3 L2.6 1.7Z M0.4 3.3 L1.5 4.7 L2.6 3.3Z" fill="#666"/></svg>
<div class="t" style="left:724.3px;top:322.20px;font-size:5.2px;color:#333;-webkit-text-stroke:0">10</div>
<div class="a" style="left:478.3px;top:336.65px;width:145.50px;height:17.40px;background:#e9e9e9;border:0.6px solid #e2e2e2;border-radius:1px"></div>
<div class="a" style="left:443.0px;top:342.35px;width:5.00px;height:5.00px;background:#fdfdfd;border:0.5px solid #e0e0e0;border-radius:0.6px"></div>
<svg style="left:443.50px;top:342.85px" width="4" height="4" viewBox="0 0 4 4"><path d="M0.5 2.0 L1.5 3.6 L3.5 0.1" fill="none" stroke="#1a1a1a" stroke-width="0.9"/></svg>
<div class="t" style="left:450.8px;top:343.08px;font-size:5.4px;color:#222;-webkit-text-stroke:0.05px">4 Ink limit</div>
<div class="a" style="left:482.9px;top:342.85px;width:5.00px;height:5.00px;background:#fdfdfd;border:0.5px solid #e0e0e0;border-radius:0.6px"></div>
<div class="a" style="left:490.1px;top:343.15px;width:4.60px;height:4.20px;background:#5ab6e2"></div>
<div class="a" style="left:502.83px;top:342.85px;width:5.00px;height:5.00px;background:#fdfdfd;border:0.5px solid #e0e0e0;border-radius:0.6px"></div>
<svg style="left:503.33px;top:343.35px" width="4" height="4" viewBox="0 0 4 4"><path d="M0.5 2.0 L1.5 3.6 L3.5 0.1" fill="none" stroke="#1a1a1a" stroke-width="0.9"/></svg>
<div class="a" style="left:510.03px;top:343.15px;width:4.60px;height:4.20px;background:#009fe0"></div>
<div class="a" style="left:522.76px;top:342.85px;width:5.00px;height:5.00px;background:#fdfdfd;border:0.5px solid #e0e0e0;border-radius:0.6px"></div>
<div class="a" style="left:529.96px;top:343.15px;width:4.60px;height:4.20px;background:#df80af"></div>
<div class="a" style="left:542.69px;top:342.85px;width:5.00px;height:5.00px;background:#fdfdfd;border:0.5px solid #e0e0e0;border-radius:0.6px"></div>
<svg style="left:543.19px;top:343.35px" width="4" height="4" viewBox="0 0 4 4"><path d="M0.5 2.0 L1.5 3.6 L3.5 0.1" fill="none" stroke="#1a1a1a" stroke-width="0.9"/></svg>
<div class="a" style="left:549.89px;top:343.15px;width:4.60px;height:4.20px;background:#e4007c"></div>
<div class="a" style="left:562.62px;top:342.85px;width:5.00px;height:5.00px;background:#fdfdfd;border:0.5px solid #e0e0e0;border-radius:0.6px"></div>
<svg style="left:563.12px;top:343.35px" width="4" height="4" viewBox="0 0 4 4"><path d="M0.5 2.0 L1.5 3.6 L3.5 0.1" fill="none" stroke="#1a1a1a" stroke-width="0.9"/></svg>
<div class="a" style="left:569.82px;top:343.15px;width:4.60px;height:4.20px;background:#ffec00"></div>
<div class="a" style="left:582.55px;top:342.85px;width:5.00px;height:5.00px;background:#fdfdfd;border:0.5px solid #e0e0e0;border-radius:0.6px"></div>
<div class="a" style="left:589.75px;top:343.15px;width:4.60px;height:4.20px;background:#808080"></div>
<div class="a" style="left:602.48px;top:342.85px;width:5.00px;height:5.00px;background:#fdfdfd;border:0.5px solid #e0e0e0;border-radius:0.6px"></div>
<svg style="left:602.98px;top:343.35px" width="4" height="4" viewBox="0 0 4 4"><path d="M0.5 2.0 L1.5 3.6 L3.5 0.1" fill="none" stroke="#1a1a1a" stroke-width="0.9"/></svg>
<div class="a" style="left:609.68px;top:343.15px;width:4.60px;height:4.20px;background:#262626"></div>
<div class="t" style="left:626.6px;top:342.96px;font-size:5.3px;color:#222;-webkit-text-stroke:0.05px">Start:</div>
<div class="a" style="left:641.5px;top:340.45px;width:23.70px;height:8.60px;background:#fff;border:0.6px solid #cfcfcf;border-radius:0.8px"></div>
<div class="a" style="left:659.2px;top:341.05px;width:5.40px;height:7.40px;border-left:0.5px solid #e2e2e2;background:#fafafa"></div>
<svg style="left:660.60px;top:342.25px" width="3" height="5" viewBox="0 0 3 5"><path d="M0.4 1.7 L1.5 0.3 L2.6 1.7Z M0.4 3.3 L1.5 4.7 L2.6 3.3Z" fill="#666"/></svg>
<div class="t" style="left:643.5px;top:343.65px;font-size:5.2px;color:#333;-webkit-text-stroke:0">220</div>
<div class="t" style="left:667.6px;top:342.96px;font-size:5.3px;color:#222;-webkit-text-stroke:0.05px">End:</div>
<div class="a" style="left:681.0px;top:340.45px;width:23.40px;height:8.60px;background:#fff;border:0.6px solid #cfcfcf;border-radius:0.8px"></div>
<div class="a" style="left:698.4px;top:341.05px;width:5.40px;height:7.40px;border-left:0.5px solid #e2e2e2;background:#fafafa"></div>
<svg style="left:699.80px;top:342.25px" width="3" height="5" viewBox="0 0 3 5"><path d="M0.4 1.7 L1.5 0.3 L2.6 1.7Z M0.4 3.3 L1.5 4.7 L2.6 3.3Z" fill="#666"/></svg>
<div class="t" style="left:683.0px;top:343.65px;font-size:5.2px;color:#333;-webkit-text-stroke:0">400</div>
<div class="t" style="left:707.0px;top:342.96px;font-size:5.3px;color:#222;-webkit-text-stroke:0.05px">Step:</div>
<div class="a" style="left:722.3px;top:340.45px;width:23.00px;height:8.60px;background:#fff;border:0.6px solid #cfcfcf;border-radius:0.8px"></div>
<div class="a" style="left:739.3px;top:341.05px;width:5.40px;height:7.40px;border-left:0.5px solid #e2e2e2;background:#fafafa"></div>
<svg style="left:740.70px;top:342.25px" width="3" height="5" viewBox="0 0 3 5"><path d="M0.4 1.7 L1.5 0.3 L2.6 1.7Z M0.4 3.3 L1.5 4.7 L2.6 3.3Z" fill="#666"/></svg>
<div class="t" style="left:724.3px;top:343.65px;font-size:5.2px;color:#333;-webkit-text-stroke:0">10</div>
<div class="a" style="left:478.3px;top:358.1px;width:145.50px;height:17.40px;background:#e9e9e9;border:0.6px solid #e2e2e2;border-radius:1px"></div>
<div class="a" style="left:443.0px;top:363.8px;width:5.00px;height:5.00px;background:#fdfdfd;border:0.5px solid #e0e0e0;border-radius:0.6px"></div>
<svg style="left:443.50px;top:364.30px" width="4" height="4" viewBox="0 0 4 4"><path d="M0.5 2.0 L1.5 3.6 L3.5 0.1" fill="none" stroke="#1a1a1a" stroke-width="0.9"/></svg>
<div class="t" style="left:450.8px;top:364.53px;font-size:5.4px;color:#222;-webkit-text-stroke:0.05px">5 Ink limit</div>
<div class="a" style="left:482.9px;top:364.3px;width:5.00px;height:5.00px;background:#fdfdfd;border:0.5px solid #e0e0e0;border-radius:0.6px"></div>
<div class="a" style="left:490.1px;top:364.6px;width:4.60px;height:4.20px;background:#5ab6e2"></div>
<div class="a" style="left:502.83px;top:364.3px;width:5.00px;height:5.00px;background:#fdfdfd;border:0.5px solid #e0e0e0;border-radius:0.6px"></div>
<svg style="left:503.33px;top:364.80px" width="4" height="4" viewBox="0 0 4 4"><path d="M0.5 2.0 L1.5 3.6 L3.5 0.1" fill="none" stroke="#1a1a1a" stroke-width="0.9"/></svg>
<div class="a" style="left:510.03px;top:364.6px;width:4.60px;height:4.20px;background:#009fe0"></div>
<div class="a" style="left:522.76px;top:364.3px;width:5.00px;height:5.00px;background:#fdfdfd;border:0.5px solid #e0e0e0;border-radius:0.6px"></div>
<svg style="left:523.26px;top:364.80px" width="4" height="4" viewBox="0 0 4 4"><path d="M0.5 2.0 L1.5 3.6 L3.5 0.1" fill="none" stroke="#1a1a1a" stroke-width="0.9"/></svg>
<div class="a" style="left:529.96px;top:364.6px;width:4.60px;height:4.20px;background:#df80af"></div>
<div class="a" style="left:542.69px;top:364.3px;width:5.00px;height:5.00px;background:#fdfdfd;border:0.5px solid #e0e0e0;border-radius:0.6px"></div>
<svg style="left:543.19px;top:364.80px" width="4" height="4" viewBox="0 0 4 4"><path d="M0.5 2.0 L1.5 3.6 L3.5 0.1" fill="none" stroke="#1a1a1a" stroke-width="0.9"/></svg>
<div class="a" style="left:549.89px;top:364.6px;width:4.60px;height:4.20px;background:#e4007c"></div>
<div class="a" style="left:562.62px;top:364.3px;width:5.00px;height:5.00px;background:#fdfdfd;border:0.5px solid #e0e0e0;border-radius:0.6px"></div>
<svg style="left:563.12px;top:364.80px" width="4" height="4" viewBox="0 0 4 4"><path d="M0.5 2.0 L1.5 3.6 L3.5 0.1" fill="none" stroke="#1a1a1a" stroke-width="0.9"/></svg>
<div class="a" style="left:569.82px;top:364.6px;width:4.60px;height:4.20px;background:#ffec00"></div>
<div class="a" style="left:582.55px;top:364.3px;width:5.00px;height:5.00px;background:#fdfdfd;border:0.5px solid #e0e0e0;border-radius:0.6px"></div>
<div class="a" style="left:589.75px;top:364.6px;width:4.60px;height:4.20px;background:#808080"></div>
<div class="a" style="left:602.48px;top:364.3px;width:5.00px;height:5.00px;background:#fdfdfd;border:0.5px solid #e0e0e0;border-radius:0.6px"></div>
<svg style="left:602.98px;top:364.80px" width="4" height="4" viewBox="0 0 4 4"><path d="M0.5 2.0 L1.5 3.6 L3.5 0.1" fill="none" stroke="#1a1a1a" stroke-width="0.9"/></svg>
<div class="a" style="left:609.68px;top:364.6px;width:4.60px;height:4.20px;background:#262626"></div>
<div class="t" style="left:626.6px;top:364.41px;font-size:5.3px;color:#222;-webkit-text-stroke:0.05px">Start:</div>
<div class="a" style="left:641.5px;top:361.9px;width:23.70px;height:8.60px;background:#fff;border:0.6px solid #cfcfcf;border-radius:0.8px"></div>
<div class="a" style="left:659.2px;top:362.5px;width:5.40px;height:7.40px;border-left:0.5px solid #e2e2e2;background:#fafafa"></div>
<svg style="left:660.60px;top:363.70px" width="3" height="5" viewBox="0 0 3 5"><path d="M0.4 1.7 L1.5 0.3 L2.6 1.7Z M0.4 3.3 L1.5 4.7 L2.6 3.3Z" fill="#666"/></svg>
<div class="t" style="left:643.5px;top:365.10px;font-size:5.2px;color:#333;-webkit-text-stroke:0">220</div>
<div class="t" style="left:667.6px;top:364.41px;font-size:5.3px;color:#222;-webkit-text-stroke:0.05px">End:</div>
<div class="a" style="left:681.0px;top:361.9px;width:23.40px;height:8.60px;background:#fff;border:0.6px solid #cfcfcf;border-radius:0.8px"></div>
<div class="a" style="left:698.4px;top:362.5px;width:5.40px;height:7.40px;border-left:0.5px solid #e2e2e2;background:#fafafa"></div>
<svg style="left:699.80px;top:363.70px" width="3" height="5" viewBox="0 0 3 5"><path d="M0.4 1.7 L1.5 0.3 L2.6 1.7Z M0.4 3.3 L1.5 4.7 L2.6 3.3Z" fill="#666"/></svg>
<div class="t" style="left:683.0px;top:365.10px;font-size:5.2px;color:#333;-webkit-text-stroke:0">400</div>
<div class="t" style="left:707.0px;top:364.41px;font-size:5.3px;color:#222;-webkit-text-stroke:0.05px">Step:</div>
<div class="a" style="left:722.3px;top:361.9px;width:23.00px;height:8.60px;background:#fff;border:0.6px solid #cfcfcf;border-radius:0.8px"></div>
<div class="a" style="left:739.3px;top:362.5px;width:5.40px;height:7.40px;border-left:0.5px solid #e2e2e2;background:#fafafa"></div>
<svg style="left:740.70px;top:363.70px" width="3" height="5" viewBox="0 0 3 5"><path d="M0.4 1.7 L1.5 0.3 L2.6 1.7Z M0.4 3.3 L1.5 4.7 L2.6 3.3Z" fill="#666"/></svg>
<div class="t" style="left:724.3px;top:365.10px;font-size:5.2px;color:#333;-webkit-text-stroke:0">20</div>
<div class="a" style="left:478.3px;top:379.55px;width:145.50px;height:17.40px;background:#e9e9e9;border:0.6px solid #e2e2e2;border-radius:1px"></div>
<div class="a" style="left:443.0px;top:385.25px;width:5.00px;height:5.00px;background:#fdfdfd;border:0.5px solid #e0e0e0;border-radius:0.6px"></div>
<svg style="left:443.50px;top:385.75px" width="4" height="4" viewBox="0 0 4 4"><path d="M0.5 2.0 L1.5 3.6 L3.5 0.1" fill="none" stroke="#1a1a1a" stroke-width="0.9"/></svg>
<div class="t" style="left:450.8px;top:385.98px;font-size:5.4px;color:#222;-webkit-text-stroke:0.05px">6 Ink limit</div>
<div class="a" style="left:482.9px;top:385.75px;width:5.00px;height:5.00px;background:#fdfdfd;border:0.5px solid #e0e0e0;border-radius:0.6px"></div>
<svg style="left:483.40px;top:386.25px" width="4" height="4" viewBox="0 0 4 4"><path d="M0.5 2.0 L1.5 3.6 L3.5 0.1" fill="none" stroke="#1a1a1a" stroke-width="0.9"/></svg>
<div class="a" style="left:490.1px;top:386.05px;width:4.60px;height:4.20px;background:#5ab6e2"></div>
<div class="a" style="left:502.83px;top:385.75px;width:5.00px;height:5.00px;background:#fdfdfd;border:0.5px solid #e0e0e0;border-radius:0.6px"></div>
<svg style="left:503.33px;top:386.25px" width="4" height="4" viewBox="0 0 4 4"><path d="M0.5 2.0 L1.5 3.6 L3.5 0.1" fill="none" stroke="#1a1a1a" stroke-width="0.9"/></svg>
<div class="a" style="left:510.03px;top:386.05px;width:4.60px;height:4.20px;background:#009fe0"></div>
<div class="a" style="left:522.76px;top:385.75px;width:5.00px;height:5.00px;background:#fdfdfd;border:0.5px solid #e0e0e0;border-radius:0.6px"></div>
<svg style="left:523.26px;top:386.25px" width="4" height="4" viewBox="0 0 4 4"><path d="M0.5 2.0 L1.5 3.6 L3.5 0.1" fill="none" stroke="#1a1a1a" stroke-width="0.9"/></svg>
<div class="a" style="left:529.96px;top:386.05px;width:4.60px;height:4.20px;background:#df80af"></div>
<div class="a" style="left:542.69px;top:385.75px;width:5.00px;height:5.00px;background:#fdfdfd;border:0.5px solid #e0e0e0;border-radius:0.6px"></div>
<svg style="left:543.19px;top:386.25px" width="4" height="4" viewBox="0 0 4 4"><path d="M0.5 2.0 L1.5 3.6 L3.5 0.1" fill="none" stroke="#1a1a1a" stroke-width="0.9"/></svg>
<div class="a" style="left:549.89px;top:386.05px;width:4.60px;height:4.20px;background:#e4007c"></div>
<div class="a" style="left:562.62px;top:385.75px;width:5.00px;height:5.00px;background:#fdfdfd;border:0.5px solid #e0e0e0;border-radius:0.6px"></div>
<svg style="left:563.12px;top:386.25px" width="4" height="4" viewBox="0 0 4 4"><path d="M0.5 2.0 L1.5 3.6 L3.5 0.1" fill="none" stroke="#1a1a1a" stroke-width="0.9"/></svg>
<div class="a" style="left:569.82px;top:386.05px;width:4.60px;height:4.20px;background:#ffec00"></div>
<div class="a" style="left:582.55px;top:385.75px;width:5.00px;height:5.00px;background:#fdfdfd;border:0.5px solid #e0e0e0;border-radius:0.6px"></div>
<div class="a" style="left:589.75px;top:386.05px;width:4.60px;height:4.20px;background:#808080"></div>
<div class="a" style="left:602.48px;top:385.75px;width:5.00px;height:5.00px;background:#fdfdfd;border:0.5px solid #e0e0e0;border-radius:0.6px"></div>
<svg style="left:602.98px;top:386.25px" width="4" height="4" viewBox="0 0 4 4"><path d="M0.5 2.0 L1.5 3.6 L3.5 0.1" fill="none" stroke="#1a1a1a" stroke-width="0.9"/></svg>
<div class="a" style="left:609.68px;top:386.05px;width:4.60px;height:4.20px;background:#262626"></div>
<div class="t" style="left:626.6px;top:385.86px;font-size:5.3px;color:#222;-webkit-text-stroke:0.05px">Start:</div>
<div class="a" style="left:641.5px;top:383.35px;width:23.70px;height:8.60px;background:#fff;border:0.6px solid #cfcfcf;border-radius:0.8px"></div>
<div class="a" style="left:659.2px;top:383.95px;width:5.40px;height:7.40px;border-left:0.5px solid #e2e2e2;background:#fafafa"></div>
<svg style="left:660.60px;top:385.15px" width="3" height="5" viewBox="0 0 3 5"><path d="M0.4 1.7 L1.5 0.3 L2.6 1.7Z M0.4 3.3 L1.5 4.7 L2.6 3.3Z" fill="#666"/></svg>
<div class="t" style="left:643.5px;top:386.55px;font-size:5.2px;color:#333;-webkit-text-stroke:0">220</div>
<div class="t" style="left:667.6px;top:385.86px;font-size:5.3px;color:#222;-webkit-text-stroke:0.05px">End:</div>
<div class="a" style="left:681.0px;top:383.35px;width:23.40px;height:8.60px;background:#fff;border:0.6px solid #cfcfcf;border-radius:0.8px"></div>
<div class="a" style="left:698.4px;top:383.95px;width:5.40px;height:7.40px;border-left:0.5px solid #e2e2e2;background:#fafafa"></div>
<svg style="left:699.80px;top:385.15px" width="3" height="5" viewBox="0 0 3 5"><path d="M0.4 1.7 L1.5 0.3 L2.6 1.7Z M0.4 3.3 L1.5 4.7 L2.6 3.3Z" fill="#666"/></svg>
<div class="t" style="left:683.0px;top:386.55px;font-size:5.2px;color:#333;-webkit-text-stroke:0">400</div>
<div class="t" style="left:707.0px;top:385.86px;font-size:5.3px;color:#222;-webkit-text-stroke:0.05px">Step:</div>
<div class="a" style="left:722.3px;top:383.35px;width:23.00px;height:8.60px;background:#fff;border:0.6px solid #cfcfcf;border-radius:0.8px"></div>
<div class="a" style="left:739.3px;top:383.95px;width:5.40px;height:7.40px;border-left:0.5px solid #e2e2e2;background:#fafafa"></div>
<svg style="left:740.70px;top:385.15px" width="3" height="5" viewBox="0 0 3 5"><path d="M0.4 1.7 L1.5 0.3 L2.6 1.7Z M0.4 3.3 L1.5 4.7 L2.6 3.3Z" fill="#666"/></svg>
<div class="t" style="left:724.3px;top:386.55px;font-size:5.2px;color:#333;-webkit-text-stroke:0">20</div>
<div class="a" style="left:478.3px;top:401.0px;width:145.50px;height:17.40px;background:#e9e9e9;border:0.6px solid #e2e2e2;border-radius:1px"></div>
<div class="a" style="left:443.0px;top:406.7px;width:5.00px;height:5.00px;background:#fdfdfd;border:0.5px solid #e0e0e0;border-radius:0.6px"></div>
<svg style="left:443.50px;top:407.20px" width="4" height="4" viewBox="0 0 4 4"><path d="M0.5 2.0 L1.5 3.6 L3.5 0.1" fill="none" stroke="#1a1a1a" stroke-width="0.9"/></svg>
<div class="t" style="left:450.8px;top:407.43px;font-size:5.4px;color:#222;-webkit-text-stroke:0.05px">7 Ink limit</div>
<div class="a" style="left:482.9px;top:407.2px;width:5.00px;height:5.00px;background:#fdfdfd;border:0.5px solid #e0e0e0;border-radius:0.6px"></div>
<svg style="left:483.40px;top:407.70px" width="4" height="4" viewBox="0 0 4 4"><path d="M0.5 2.0 L1.5 3.6 L3.5 0.1" fill="none" stroke="#1a1a1a" stroke-width="0.9"/></svg>
<div class="a" style="left:490.1px;top:407.5px;width:4.60px;height:4.20px;background:#5ab6e2"></div>
<div class="a" style="left:502.83px;top:407.2px;width:5.00px;height:5.00px;background:#fdfdfd;border:0.5px solid #e0e0e0;border-radius:0.6px"></div>
<svg style="left:503.33px;top:407.70px" width="4" height="4" viewBox="0 0 4 4"><path d="M0.5 2.0 L1.5 3.6 L3.5 0.1" fill="none" stroke="#1a1a1a" stroke-width="0.9"/></svg>
<div class="a" style="left:510.03px;top:407.5px;width:4.60px;height:4.20px;background:#009fe0"></div>
<div class="a" style="left:522.76px;top:407.2px;width:5.00px;height:5.00px;background:#fdfdfd;border:0.5px solid #e0e0e0;border-radius:0.6px"></div>
<svg style="left:523.26px;top:407.70px" width="4" height="4" viewBox="0 0 4 4"><path d="M0.5 2.0 L1.5 3.6 L3.5 0.1" fill="none" stroke="#1a1a1a" stroke-width="0.9"/></svg>
<div class="a" style="left:529.96px;top:407.5px;width:4.60px;height:4.20px;background:#df80af"></div>
<div class="a" style="left:542.69px;top:407.2px;width:5.00px;height:5.00px;background:#fdfdfd;border:0.5px solid #e0e0e0;border-radius:0.6px"></div>
<svg style="left:543.19px;top:407.70px" width="4" height="4" viewBox="0 0 4 4"><path d="M0.5 2.0 L1.5 3.6 L3.5 0.1" fill="none" stroke="#1a1a1a" stroke-width="0.9"/></svg>
<div class="a" style="left:549.89px;top:407.5px;width:4.60px;height:4.20px;background:#e4007c"></div>
<div class="a" style="left:562.62px;top:407.2px;width:5.00px;height:5.00px;background:#fdfdfd;border:0.5px solid #e0e0e0;border-radius:0.6px"></div>
<svg style="left:563.12px;top:407.70px" width="4" height="4" viewBox="0 0 4 4"><path d="M0.5 2.0 L1.5 3.6 L3.5 0.1" fill="none" stroke="#1a1a1a" stroke-width="0.9"/></svg>
<div class="a" style="left:569.82px;top:407.5px;width:4.60px;height:4.20px;background:#ffec00"></div>
<div class="a" style="left:582.55px;top:407.2px;width:5.00px;height:5.00px;background:#fdfdfd;border:0.5px solid #e0e0e0;border-radius:0.6px"></div>
<svg style="left:583.05px;top:407.70px" width="4" height="4" viewBox="0 0 4 4"><path d="M0.5 2.0 L1.5 3.6 L3.5 0.1" fill="none" stroke="#1a1a1a" stroke-width="0.9"/></svg>
<div class="a" style="left:589.75px;top:407.5px;width:4.60px;height:4.20px;background:#808080"></div>
<div class="a" style="left:602.48px;top:407.2px;width:5.00px;height:5.00px;background:#fdfdfd;border:0.5px solid #e0e0e0;border-radius:0.6px"></div>
<svg style="left:602.98px;top:407.70px" width="4" height="4" viewBox="0 0 4 4"><path d="M0.5 2.0 L1.5 3.6 L3.5 0.1" fill="none" stroke="#1a1a1a" stroke-width="0.9"/></svg>
<div class="a" style="left:609.68px;top:407.5px;width:4.60px;height:4.20px;background:#262626"></div>
<div class="t" style="left:626.6px;top:407.31px;font-size:5.3px;color:#222;-webkit-text-stroke:0.05px">Start:</div>
<div class="a" style="left:641.5px;top:404.8px;width:23.70px;height:8.60px;background:#fff;border:0.6px solid #cfcfcf;border-radius:0.8px"></div>
<div class="a" style="left:659.2px;top:405.4px;width:5.40px;height:7.40px;border-left:0.5px solid #e2e2e2;background:#fafafa"></div>
<svg style="left:660.60px;top:406.60px" width="3" height="5" viewBox="0 0 3 5"><path d="M0.4 1.7 L1.5 0.3 L2.6 1.7Z M0.4 3.3 L1.5 4.7 L2.6 3.3Z" fill="#666"/></svg>
<div class="t" style="left:643.5px;top:408.00px;font-size:5.2px;color:#333;-webkit-text-stroke:0">220</div>
<div class="t" style="left:667.6px;top:407.31px;font-size:5.3px;color:#222;-webkit-text-stroke:0.05px">End:</div>
<div class="a" style="left:681.0px;top:404.8px;width:23.40px;height:8.60px;background:#fff;border:0.6px solid #cfcfcf;border-radius:0.8px"></div>
<div class="a" style="left:698.4px;top:405.4px;width:5.40px;height:7.40px;border-left:0.5px solid #e2e2e2;background:#fafafa"></div>
<svg style="left:699.80px;top:406.60px" width="3" height="5" viewBox="0 0 3 5"><path d="M0.4 1.7 L1.5 0.3 L2.6 1.7Z M0.4 3.3 L1.5 4.7 L2.6 3.3Z" fill="#666"/></svg>
<div class="t" style="left:683.0px;top:408.00px;font-size:5.2px;color:#333;-webkit-text-stroke:0">400</div>
<div class="t" style="left:707.0px;top:407.31px;font-size:5.3px;color:#222;-webkit-text-stroke:0.05px">Step:</div>
<div class="a" style="left:722.3px;top:404.8px;width:23.00px;height:8.60px;background:#fff;border:0.6px solid #cfcfcf;border-radius:0.8px"></div>
<div class="a" style="left:739.3px;top:405.4px;width:5.40px;height:7.40px;border-left:0.5px solid #e2e2e2;background:#fafafa"></div>
<svg style="left:740.70px;top:406.60px" width="3" height="5" viewBox="0 0 3 5"><path d="M0.4 1.7 L1.5 0.3 L2.6 1.7Z M0.4 3.3 L1.5 4.7 L2.6 3.3Z" fill="#666"/></svg>
<div class="t" style="left:724.3px;top:408.00px;font-size:5.2px;color:#333;-webkit-text-stroke:0">20</div>
<div class="a" style="left:427.2px;top:432.0px;width:334.20px;height:0.80px;background:#e2e2e2"></div>
<div class="a" style="left:691.6px;top:436.3px;width:31.80px;height:9.30px;background:#e8f1fa;border:0.8px solid #4d8fd6;border-radius:1.2px"></div>
<div class="t" style="left:702.6px;top:438.71px;font-size:5.3px;color:#111;-webkit-text-stroke:0.03px">OK</div>
<div class="a" style="left:725.7px;top:436.3px;width:31.60px;height:9.30px;background:#f5f5f5;border:0.6px solid #cfcfcf;border-radius:1.2px"></div>
<div class="t" style="left:734.0px;top:438.71px;font-size:5.3px;color:#111;-webkit-text-stroke:0.03px">Cancel</div>
</body></html>
